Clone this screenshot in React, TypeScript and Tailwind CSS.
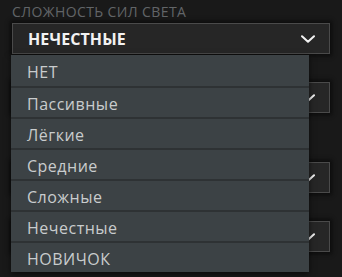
import React from "react";

const options = ["НЕТ", "Пассивные", "Лёгкие", "Средние", "Сложные", "Нечестные", "НОВИЧОК"];

function Chevron() {
  return (
    <svg width="14" height="8" viewBox="0 0 14 8" fill="none">
      <path d="M1 1.2L7 6.8L13 1.2" stroke="#f2f2f2" strokeWidth="2" strokeLinecap="round" strokeLinejoin="round" />
    </svg>
  );
}

// value is left out for the selects that sit under the open list
function Select({ value }: { value?: string }) {
  return (
    <div className="h-[31px] flex items-center justify-between pl-[15px] pr-[14px] bg-[#262626] border border-[#4a4a4a] shadow-[0_0_4px_2px_#0c0c0c]">
      <span className="text-[16px] font-bold text-[#f2f2f2] tracking-[0.1px]">{value}</span>
      <Chevron />
    </div>
  );
}

export default function App() {
  return (
    <div className="relative w-[342px] h-[277px] overflow-hidden bg-[#191919] font-['Open_Sans',sans-serif]">
      <div className="flex flex-col pl-3 pr-[12px] pt-[2px]">
        <p className="text-[14px] leading-[19px] font-medium text-[#626568] uppercase tracking-[0.4px]">Сложность сил света</p>
        <div className="mt-[2px]">
          <Select value="НЕЧЕСТНЫЕ" />
        </div>
        {/* hidden behind the list */}
        <div className="h-[28px]" />
        <Select />
        <div className="h-[49px]" />
        <Select />
        <div className="h-[28px]" />
        <Select />
      </div>

      {/* dropdown list */}
      <ul className="absolute left-[11px] top-[55px] w-[298px] bg-[#3c4245] shadow-[0_2px_6px_rgba(0,0,0,0.6)]">
        {options.map((o, i) => (
          <li
            key={o}
            className={`h-[31px] flex items-center pl-[16px] pt-[3px] text-[16px] tracking-[0.5px] text-[#c9cccd] ${i > 0 ? "border-t-2 border-[#2e3234]" : ""}`}
          >
            {o}
          </li>
        ))}
      </ul>
    </div>
  );
}
